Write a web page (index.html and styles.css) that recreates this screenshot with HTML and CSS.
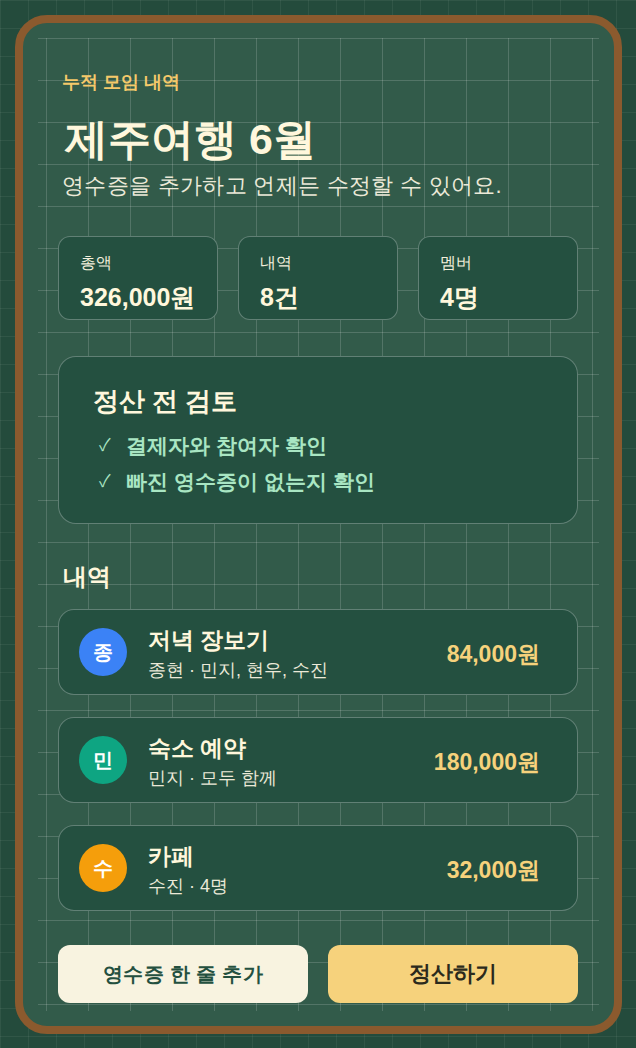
FILE: index.html
```html
<!DOCTYPE html>
<html lang="ko">
<head>
  <meta charset="UTF-8">
  <title>제주여행 6월</title>
  <link rel="stylesheet" href="styles.css">
</head>
<body>
  <div class="board">
    <div class="header">
      <p class="eyebrow">누적 모임 내역</p>
      <h1>제주여행 6월</h1>
      <p class="subtitle">영수증을 추가하고 언제든 수정할 수 있어요.</p>
    </div>

    <div class="stats">
      <div class="stat">
        <span class="stat-label">총액</span>
        <span class="stat-value">326,000원</span>
      </div>
      <div class="stat">
        <span class="stat-label">내역</span>
        <span class="stat-value">8건</span>
      </div>
      <div class="stat">
        <span class="stat-label">멤버</span>
        <span class="stat-value">4명</span>
      </div>
    </div>

    <div class="review">
      <h2>정산 전 검토</h2>
      <ul class="checklist">
        <li><span class="check">✓</span>결제자와 참여자 확인</li>
        <li><span class="check">✓</span>빠진 영수증이 없는지 확인</li>
      </ul>
    </div>

    <h3 class="section-title">내역</h3>

    <div class="list">
      <div class="row">
        <div class="avatar blue">종</div>
        <div class="row-text">
          <div class="row-title">저녁 장보기</div>
          <div class="row-sub">종현 · 민지, 현우, 수진</div>
        </div>
        <div class="amount">84,000원</div>
      </div>
      <div class="row">
        <div class="avatar green">민</div>
        <div class="row-text">
          <div class="row-title">숙소 예약</div>
          <div class="row-sub">민지 · 모두 함께</div>
        </div>
        <div class="amount">180,000원</div>
      </div>
      <div class="row">
        <div class="avatar orange">수</div>
        <div class="row-text">
          <div class="row-title">카페</div>
          <div class="row-sub">수진 · 4명</div>
        </div>
        <div class="amount">32,000원</div>
      </div>
    </div>

    <div class="actions">
      <button class="btn btn-light">영수증 한 줄 추가</button>
      <button class="btn btn-gold">정산하기</button>
    </div>
  </div>
</body>
</html>
```

FILE: styles.css
```css
* {
  box-sizing: border-box;
}

body {
  margin: 0;
  padding: 15px 14px 14px 15px;
  font-family: "Liberation Sans", sans-serif;
  color: #fff7dc;
  background-color: #244b3c;
  background-image:
    linear-gradient(rgba(255, 255, 255, 0.06) 1px, transparent 1px),
    linear-gradient(90deg, rgba(255, 255, 255, 0.06) 1px, transparent 1px);
  background-size: 28px 28px;
}

.board {
  position: relative;
  height: 1019px;
  display: flex;
  flex-direction: column;
  padding: 47px 36px 23px 35px;
  background-color: #325b4a;
  border: 8px solid #8b5a2e;
  border-radius: 32px;
}

/* faint notebook grid behind the content */
.board::before {
  content: "";
  position: absolute;
  inset: 15px;
  background-image:
    linear-gradient(rgba(255, 255, 255, 0.16) 1px, transparent 1px),
    linear-gradient(90deg, rgba(255, 255, 255, 0.16) 1px, transparent 1px);
  background-size: 42px 42px;
  background-position: 0 0, 8px 0;
}

.board > * {
  position: relative;
}

.header {
  padding-left: 4px;
}

.eyebrow {
  margin: 0;
  font-size: 18px;
  line-height: 24px;
  font-weight: 700;
  color: #f5c96a;
}

h1 {
  margin: 20px 0 0;
  padding-left: 3px;
  font-size: 43px;
  line-height: 50px;
  font-weight: 700;
  color: #fff7dc;
}

.subtitle {
  margin: 7px 0 0;
  font-size: 22px;
  line-height: 30px;
  letter-spacing: 0.3px;
  color: #ebe9d8;
}

.stats {
  display: grid;
  grid-template-columns: repeat(3, 1fr);
  gap: 20px;
  margin-top: 35px;
}

.stat {
  display: flex;
  flex-direction: column;
  height: 84px;
  padding: 15px 21px 0;
  background: #245040;
  border: 1px solid rgba(255, 255, 255, 0.28);
  border-radius: 12px;
}

.stat-label {
  font-size: 16px;
  line-height: 22px;
  color: #f3efdc;
}

.stat-value {
  margin-top: 8px;
  font-size: 25px;
  line-height: 30px;
  font-weight: 700;
  color: #fff7dc;
}

.review {
  margin-top: 36px;
  height: 168px;
  padding: 27px 34px 0;
  background: #245040;
  border: 1px solid rgba(255, 255, 255, 0.28);
  border-radius: 18px;
}

.review h2 {
  margin: 0;
  font-size: 26px;
  line-height: 34px;
  font-weight: 700;
  color: #fff7dc;
}

.checklist {
  list-style: none;
  margin: 13px 0 0;
  padding: 0 0 0 6px;
}

.checklist li {
  display: flex;
  align-items: center;
  font-size: 21px;
  line-height: 30px;
  font-weight: 700;
  color: #a9e6c3;
  margin-bottom: 6px;
}

.check {
  width: 27px;
  font-size: 17px;
  font-weight: 400;
}

.section-title {
  margin: 37px 0 0 5px;
  font-size: 24px;
  line-height: 32px;
  font-weight: 700;
  color: #fff7dc;
}

.list {
  display: flex;
  flex-direction: column;
  gap: 22px;
  margin-top: 16px;
}

.row {
  display: flex;
  align-items: center;
  height: 86px;
  padding: 0 37px 0 20px;
  background: #245040;
  border: 1px solid rgba(255, 255, 255, 0.28);
  border-radius: 16px;
}

.avatar {
  width: 48px;
  height: 48px;
  border-radius: 50%;
  display: flex;
  align-items: center;
  justify-content: center;
  font-size: 20px;
  font-weight: 700;
  color: #ffffff;
  flex-shrink: 0;
}

.blue { background: #3b82f6; }
.green { background: #0ea582; }
.orange { background: #f59e0b; }

.row-text {
  flex: 1;
  margin-left: 21px;
  padding-top: 4px;
}

.row-title {
  font-size: 23px;
  line-height: 28px;
  font-weight: 700;
  color: #fff7dc;
}

.row-sub {
  margin-top: 4px;
  font-size: 18px;
  line-height: 24px;
  color: #ebe9d8;
}

.amount {
  padding-top: 4px;
  font-size: 23px;
  font-weight: 700;
  color: #f6d27c;
}

.actions {
  display: flex;
  gap: 20px;
  margin-top: auto;
}

.btn {
  flex: 1;
  height: 58px;
  border: none;
  border-radius: 12px;
  font-family: inherit;
  cursor: pointer;
}

.btn-light {
  background: #f8f3e0;
  color: #24503f;
  font-size: 20px;
  font-weight: 700;
  letter-spacing: 0.3px;
}

.btn-gold {
  background: #f6d27c;
  color: #2b2a1c;
  font-size: 22px;
  font-weight: 600;
}
```
